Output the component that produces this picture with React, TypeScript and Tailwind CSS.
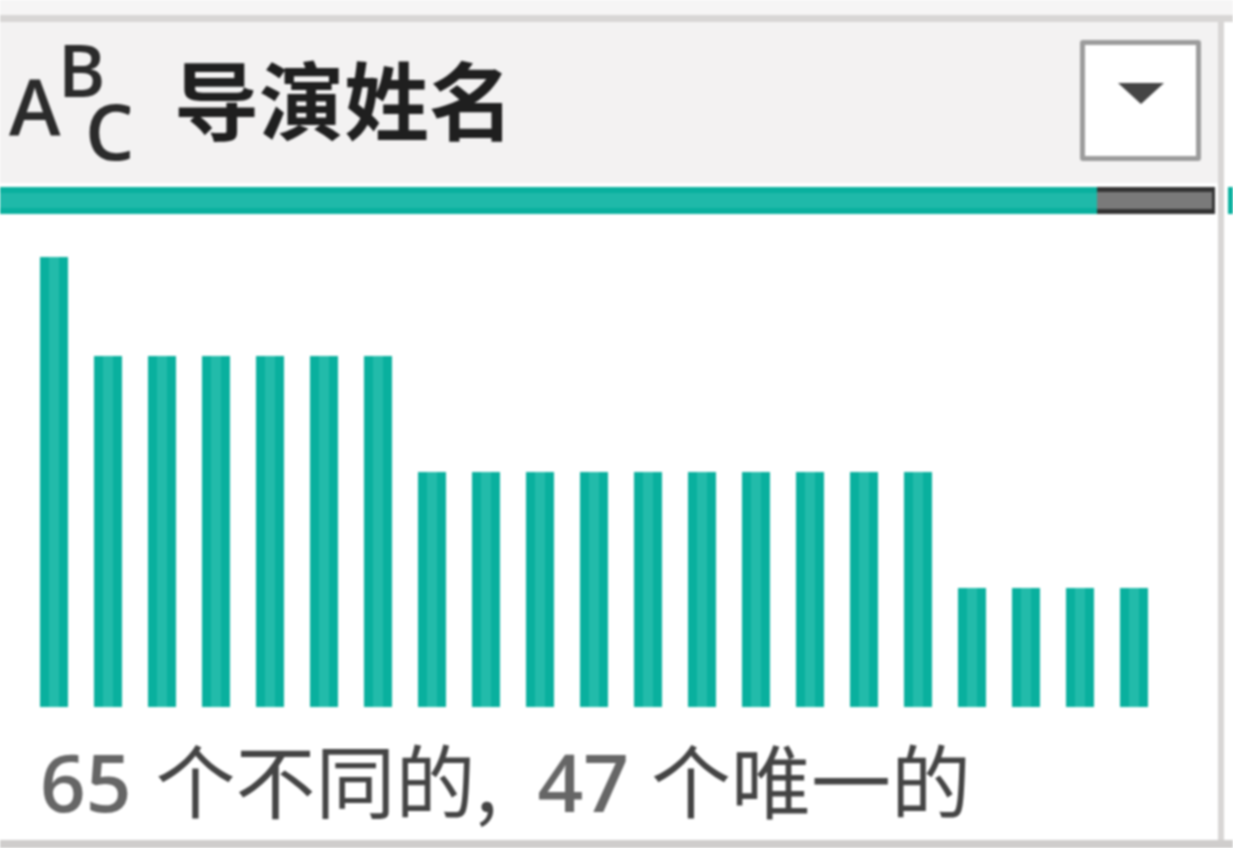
import React from 'react'

const cjk = '"Noto Sans CJK SC", sans-serif'
const latin = '"Open Sans", sans-serif'

// 柱状图高度，从左到右
const barHeights = [
    450, 351, 351, 351, 351, 351, 351,
    235, 235, 235, 235, 235, 235, 235, 235, 235, 235,
    119, 119, 119, 119,
]

const AbcIcon = () => (
    <svg width="130" height="161" viewBox="0 0 130 161" className="shrink-0" fill="#2b2b2b" fontWeight="600" fontFamily={latin}>
        <text x="9" y="113" fontSize="78">A</text>
        <text x="58" y="75" fontSize="72">B</text>
        <text x="85" y="138" fontSize="78">C</text>
    </svg>
)

const QualityBar = () => (
    <div className="flex h-[27px] w-[1215px] border-y-[6px] border-[#09b09e] bg-[#1fb9a9]">
        <div className="flex-1" />
        <div className="-my-[6px] w-[118px] border-y-[5px] border-r-[3px] border-[#333] bg-[#7a7a7a]" />
    </div>
)

const Distribution = () => (
    <div className="flex h-[450px] items-end gap-[26px] pl-[40px]">
        {barHeights.map((h, i) => (
            <div
                key={i}
                className="w-[28px] border-x-[9px] border-[#09b09e] bg-[#22bbaa]"
                style={{ height: h }}
            />
        ))}
    </div>
)

export default function App() {
    return (
        <div className="flex h-[848px] w-[1233px] flex-col overflow-hidden bg-white blur-[1.2px]">
            <div className="h-[15px] shrink-0 bg-[#f6f5f5]" />
            <div className="h-[7px] shrink-0 bg-[#d8d6d5]" />

            <div className="flex flex-1">
                <div className="flex w-[1218px] flex-col">
                    {/* 列标题 */}
                    <div className="flex h-[161px] items-center bg-[#f3f2f2] pr-[17px]">
                        <AbcIcon />
                        <span
                            className="mb-[13px] ml-[44px] text-[85px] font-bold leading-none text-[#1f1f1f]"
                            style={{ fontFamily: cjk }}
                        >
                            导演姓名
                        </span>
                        <div className="mb-[4px] ml-auto flex h-[121px] w-[121px] items-center justify-center rounded-[3px] border-[5px] border-[#9c9c9c] bg-white">
                            <svg width="46" height="21" viewBox="0 0 46 21" className="mb-[14px]">
                                <path d="M0 0 H46 L23 21 Z" fill="#444" />
                            </svg>
                        </div>
                    </div>

                    <div className="mt-[4px]">
                        <QualityBar />
                    </div>

                    <div className="mt-[43px]">
                        <Distribution />
                    </div>

                    {/* 统计文字 */}
                    <div
                        className="mt-[30px] whitespace-nowrap pl-[40px] text-[80px] leading-none text-[#444]"
                        style={{ fontFamily: cjk }}
                    >
                        <span className="mr-[6px] font-semibold text-[#666]" style={{ fontFamily: latin }}>65</span> 个不同的<span className="mr-[22px]">,</span> <span className="mr-[4px] font-semibold text-[#666]" style={{ fontFamily: latin }}>47</span> 个唯一的
                    </div>
                </div>

                <div className="w-[6px] bg-[#d8d6d5]" />

                <div className="flex-1 pt-[165px]">
                    <div className="ml-[4px] h-[27px] bg-[#09b09e]" />
                </div>
            </div>

            <div className="h-[8px] shrink-0 bg-[#cfcdcc]" />
        </div>
    )
}
